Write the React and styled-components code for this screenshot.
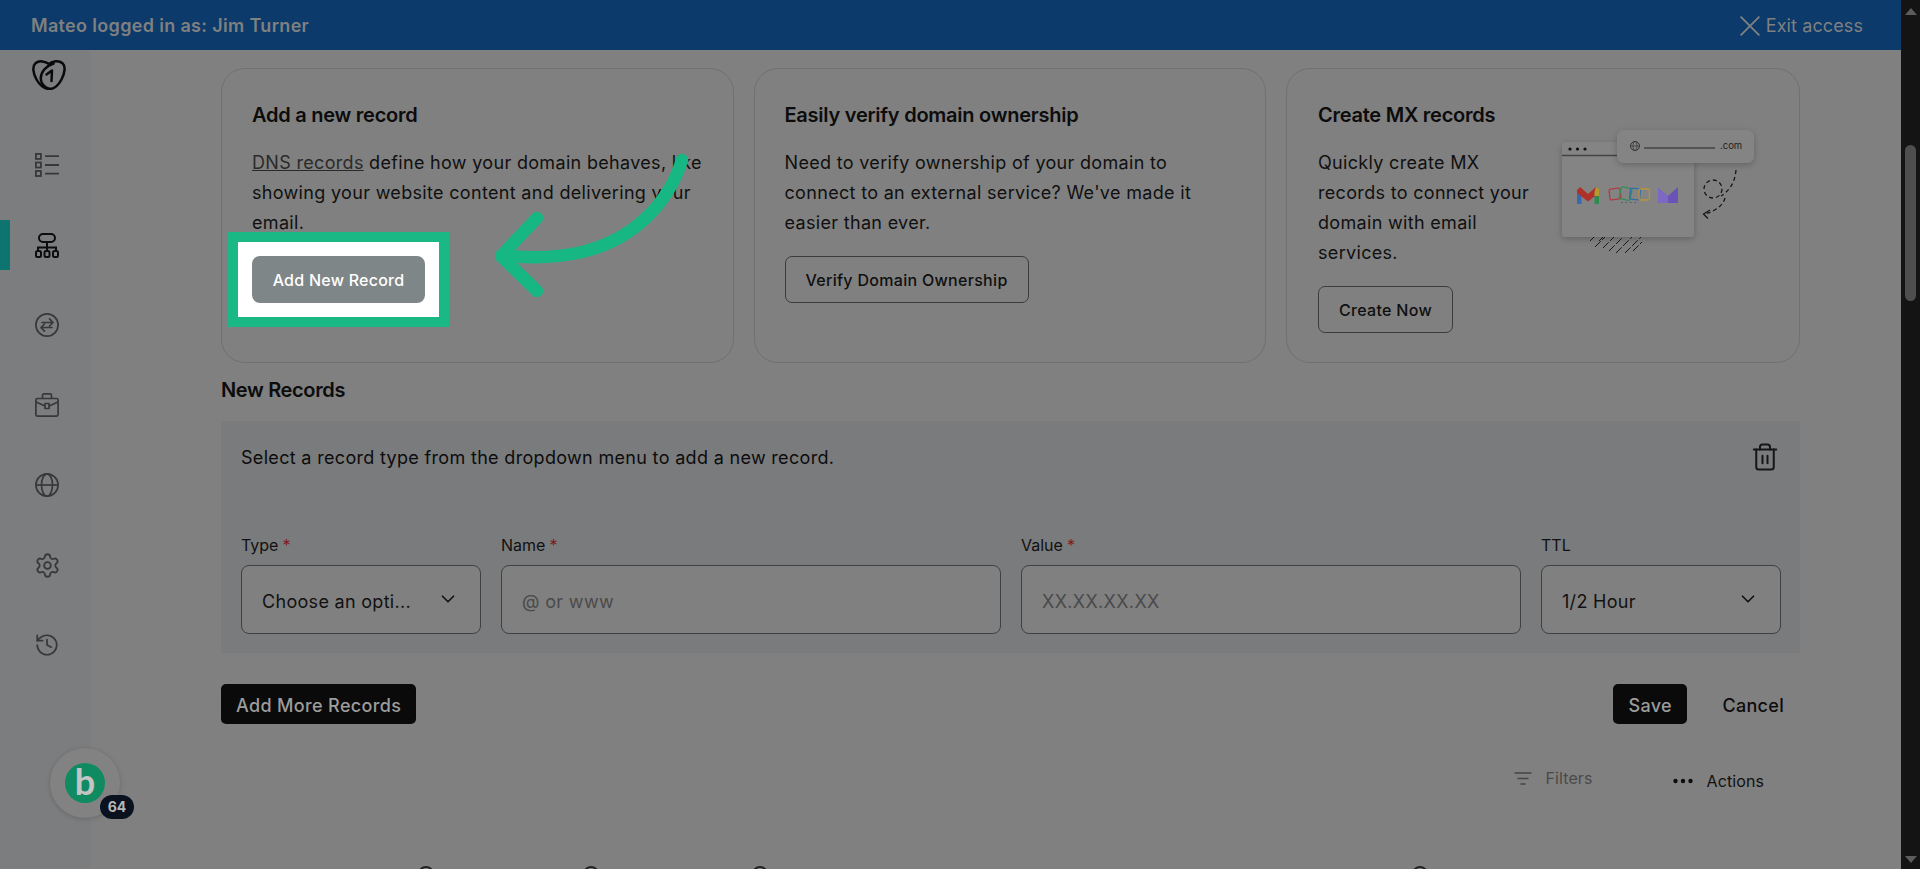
import React from 'react';
import styled, { createGlobalStyle } from 'styled-components';
import { ChevronDown, Trash2, Settings, History } from 'lucide-react';

const GlobalStyle = createGlobalStyle`
  html, body {
    margin: 0;
    height: 100%;
    overflow: hidden;
    background: #808080;
  }
  * { box-sizing: border-box; }
  #root { height: 100%; }
`;

const Page = styled.div`
  display: flex;
  height: 869px;
  font-family: Inter, "Liberation Sans", sans-serif;
  color: #0c0c0c;
  position: relative;
  overflow: hidden;
`;

const Column = styled.div`
  flex: 1;
  min-width: 0;
  display: flex;
  flex-direction: column;
`;

const TopBar = styled.header`
  height: 50px;
  flex: none;
  background: #0b3a6b;
  color: #808080;
  display: flex;
  align-items: center;
  justify-content: space-between;
  padding: 1px 38px 0 31px;
  font-size: 18px;
`;

const LoggedIn = styled.span`
  font-weight: 600;
  letter-spacing: 0.33px;
`;

const ExitAccess = styled.span`
  display: flex;
  align-items: center;
  gap: 6px;
  letter-spacing: 0.1px;
`;

const Body = styled.div`
  flex: 1;
  display: flex;
  min-height: 0;
`;

const Sidebar = styled.nav`
  width: 90px;
  flex: none;
  background: #7c7d7f;
  display: flex;
  flex-direction: column;
`;

const LogoWrap = styled.div`
  height: 75px;
  padding: 10px 0 0 32px;
`;

const SideItem = styled.div`
  height: 80px;
  flex: none;
  padding-left: 35px;
  display: flex;
  align-items: center;
  color: ${(p) => (p.$active ? '#0d0d0d' : '#383838')};
  position: relative;

  &::before {
    content: '';
    display: ${(p) => (p.$active ? 'block' : 'none')};
    position: absolute;
    left: 0;
    top: 15px;
    width: 10px;
    height: 50px;
    background: #0e7470;
  }
`;

const GearIcon = styled(Settings)`
  margin-left: -1.5px;
`;

const HistoryIcon = styled(History)`
  margin-left: -1px;
`;

const Main = styled.main`
  flex: 1;
  min-width: 0;
  padding: 18px 101px 0 131px;
  overflow: hidden;
`;

const CardRow = styled.section`
  display: grid;
  grid-template-columns: repeat(3, 1fr);
  gap: 20px;
`;

const Card = styled.article`
  height: 295px;
  border: 1px solid #6e7072;
  border-radius: 24px;
  padding: 31px 30px 0 ${(p) => (p.$split ? 31 : 30)}px;
  position: relative;
  display: ${(p) => (p.$split ? 'flex' : 'block')};
`;

const CardTitle = styled.h3`
  margin: 0 0 18px;
  font-size: 20px;
  line-height: 30px;
  font-weight: 600;
  letter-spacing: -0.25px;
`;

const CardText = styled.p`
  margin: 0 0 18px;
  font-size: 18px;
  line-height: 30px;
  letter-spacing: 0.32px;
  color: #101010;
`;

const TextLink = styled.a`
  color: #2a2a2a;
  text-decoration: underline;
`;

const CardCopy = styled.div`
  width: 226px;
  margin-right: 5px;
  flex: none;
`;

const OutlineButton = styled.button`
  height: 47px;
  padding: 0 20px;
  background: transparent;
  border: 1px solid #3c3c3c;
  border-radius: 7px;
  font: 500 16px Inter, "Liberation Sans", sans-serif;
  letter-spacing: 0.3px;
  color: #0f0f0f;
`;

const Spotlight = styled.span`
  position: relative;
  display: inline-block;
  z-index: 1;

  &::before {
    content: '';
    position: absolute;
    inset: -24px;
    background: #fff;
    border: 10px solid #1ab884;
  }
`;

const SpotButton = styled.button`
  position: relative;
  height: 47px;
  width: 173px;
  background: #7f8687;
  border: none;
  border-radius: 8px;
  font: 500 16px Inter, "Liberation Sans", sans-serif;
  letter-spacing: 0.25px;
  color: #fff;
`;

const ArrowSvg = styled.svg`
  position: absolute;
  left: 268px;
  top: 81px;
  z-index: 2;
`;

const Illustration = styled.svg`
  flex: none;
  margin-top: 25px;
`;

const SectionTitle = styled.h2`
  margin: 12px 0 16px;
  font-size: 20px;
  line-height: 30px;
  font-weight: 600;
  letter-spacing: -0.35px;
`;

const RecordPanel = styled.section`
  height: 232px;
  background: #7a7b7d;
  padding: 22px 19px 19px 20px;
  display: flex;
  flex-direction: column;
  justify-content: space-between;
`;

const PanelHead = styled.div`
  display: flex;
  justify-content: space-between;
  align-items: flex-start;
`;

const PanelText = styled.p`
  margin: 0;
  font-size: 18px;
  line-height: 30px;
  letter-spacing: 0.32px;
`;

const TrashButton = styled.span`
  color: #161616;
  margin: -1px 1px 0 0;
  display: flex;
`;

const FieldGrid = styled.div`
  display: grid;
  grid-template-columns: 240px 500px 500px 240px;
  gap: 20px;
`;

const Field = styled.label`
  display: flex;
  flex-direction: column;
  gap: 9px;
  font-size: 16px;
  line-height: 22px;
  color: #111;
`;

const Required = styled.span`
  color: #7e1c1c;
  margin-left: 4px;
`;

const SelectBox = styled.div`
  height: 69px;
  border: 1px solid #3f4041;
  border-radius: 8px;
  background: #808080;
  display: flex;
  align-items: center;
  justify-content: space-between;
  padding: 5px 21px 0 20px;
  font-size: 18px;
  letter-spacing: 0.3px;
  color: #111;

  svg { margin-top: -7px; }
`;

const TextInput = styled.input`
  height: 69px;
  border: 1px solid #3f4041;
  border-radius: 8px;
  background: #808080;
  padding: 3px 20px 0;
  font: 400 18px Inter, "Liberation Sans", sans-serif;
  letter-spacing: 0.35px;
  outline: none;

  &::placeholder { color: #4a4a4a; opacity: 1; }
`;

const ActionRow = styled.div`
  display: flex;
  align-items: center;
  margin-top: 31px;
`;

const DarkButton = styled.button`
  height: 40px;
  padding: 2px 15px 0;
  background: #0a0a0a;
  border: none;
  border-radius: 5px;
  font: 500 18px Inter, "Liberation Sans", sans-serif;
  letter-spacing: 0.35px;
  color: #9c9c9c;
`;

const PushRight = styled.div`
  margin-left: auto;
`;

const CancelButton = styled.button`
  height: 40px;
  width: 113px;
  padding: 2px 16px 0 0;
  text-align: right;
  background: none;
  border: none;
  font: 500 18px Inter, "Liberation Sans", sans-serif;
  letter-spacing: 0.3px;
  color: #0c0c0c;
`;

const ToolRow = styled.div`
  display: flex;
  justify-content: flex-end;
  align-items: flex-start;
  gap: 80px;
  margin-top: 44px;
  padding-right: 36px;
  height: 98px;
  font-size: 16px;
  line-height: 20px;
`;

const ToolItem = styled.span`
  display: flex;
  align-items: center;
  gap: ${(p) => p.$gap}px;
  color: ${(p) => (p.$muted ? '#4a4a4a' : '#111')};
  margin-top: ${(p) => (p.$muted ? 0 : 3)}px;
  letter-spacing: 0.1px;
`;

const HeadRow = styled.div`
  display: flex;
  padding-left: 197px;
`;

const SortMark = styled.span`
  width: 16px;
  height: 16px;
  flex: none;
  border: 2px solid #222;
  border-radius: 50%;
  margin-left: ${(p) => p.$offset}px;
`;

const ScrollTrack = styled.aside`
  width: 19px;
  flex: none;
  background: #141414;
  padding: 8px 4px 0;
  display: flex;
  flex-direction: column;
  align-items: center;
  position: relative;
`;

const ArrowUp = styled.span`
  border-left: 6px solid transparent;
  border-right: 6px solid transparent;
  border-bottom: 7px solid #5c5c5c;
`;

const ArrowDown = styled.span`
  position: absolute;
  bottom: 6px;
  border-left: 6px solid transparent;
  border-right: 6px solid transparent;
  border-top: 7px solid #5c5c5c;
`;

const Thumb = styled.span`
  width: 11px;
  height: 156px;
  margin-top: 130px;
  border-radius: 6px;
  background: #4e4e4e;
`;

const Widget = styled.div`
  position: absolute;
  left: 50px;
  top: 748px;
  width: 70px;
  height: 70px;
  border-radius: 50%;
  background: #828282;
  box-shadow: 0 1px 5px rgba(0, 0, 0, 0.18);
  display: flex;
  align-items: center;
  justify-content: center;
`;

const WidgetLogo = styled.span`
  width: 40px;
  height: 40px;
  border-radius: 50%;
  background: #108a61;
  color: #c4c4c4;
  font: 700 36px/36px Lato, "Liberation Sans", sans-serif;
  text-align: center;
`;

const WidgetBadge = styled.span`
  position: absolute;
  left: 50px;
  top: 47px;
  width: 34px;
  height: 24px;
  border-radius: 12px;
  background: #0a1220;
  color: #b8b8b8;
  font: 700 14px/24px Inter, "Liberation Sans", sans-serif;
  text-align: center;
`;

const GoLogo = () => (
  <svg width="34" height="30" viewBox="0 0 34 30" fill="none" stroke="#0a0a0a" strokeWidth="2.5" strokeLinecap="round" strokeLinejoin="round">
    <path d="M17 4C13.500 1.200 7 .2 3.500 3.200C.2 6.200 .8 13 4.500 19.500C8 25.500 13 29 17.500 29C22 29 26.500 25 29.500 19.500C33 13 33.800 6 30.500 3.200C27 .2 20.500 1 17 4Z" />
    <path d="M21.500 3.500C14 6 8.500 12 8.800 19C9 24 13 27.800 17.500 29" />
    <path d="M14.500 14.500L20 10.500L19.500 21" />
  </svg>
);

const ListIcon = () => (
  <svg width="24" height="24" viewBox="0 0 24 24" fill="none" stroke="currentColor" strokeWidth="1.8">
    <rect x=".9" y=".9" width="5" height="5" />
    <rect x=".9" y="9.500" width="5" height="5" />
    <rect x=".9" y="18" width="5" height="5" />
    <path d="M10 3.200H24M10 12H24M10 20.600H24" />
  </svg>
);

const DnsIcon = () => (
  <svg width="24" height="25" viewBox="0 0 24 25" fill="none" stroke="currentColor" strokeWidth="2">
    <rect x="4" y="1" width="16" height="8" rx="4" />
    <path d="M12 9V17M3 18V14.500H21V18" />
    <rect x="1" y="18" width="5" height="6" rx="1.500" />
    <rect x="9.500" y="18" width="5" height="6" rx="1.500" />
    <rect x="18" y="18" width="5" height="6" rx="1.500" />
  </svg>
);

const SwapIcon = () => (
  <svg width="24" height="24" viewBox="0 0 24 24" fill="none" stroke="currentColor" strokeWidth="1.7" strokeLinecap="round" strokeLinejoin="round">
    <circle cx="12" cy="12" r="11.100" />
    <path d="M7 9.500H18M14.500 5.800L18 9.500L14.500 13" />
    <path d="M17 14.500H6M9.500 11L6 14.500L9.500 18.200" />
  </svg>
);

const CaseIcon = () => (
  <svg width="24" height="24" viewBox="0 0 24 24" fill="none" stroke="currentColor" strokeWidth="1.7" strokeLinejoin="round">
    <rect x=".9" y="5.500" width="22.200" height="17.600" rx="1.500" />
    <path d="M7.500 5.500V2.500C7.500 1.500 8.200 .9 9 .9H15C15.800 .9 16.500 1.500 16.500 2.500V5.500" />
    <path d="M1 9L10 13M23 9L14 13" />
    <rect x="10" y="10.500" width="4" height="5" />
  </svg>
);

const GlobeIcon = () => (
  <svg width="24" height="24" viewBox="0 0 24 24" fill="none" stroke="currentColor" strokeWidth="1.7">
    <circle cx="12" cy="12" r="11.100" />
    <ellipse cx="12" cy="12" rx="5.500" ry="11.100" />
    <path d="M1 12H23" />
  </svg>
);

const CloseIcon = () => (
  <svg width="20" height="20" viewBox="0 0 20 20" stroke="#808080" strokeWidth="1.800">
    <path d="M.6 .6L19.400 19.400M19.400 .6L.6 19.400" />
  </svg>
);

const FilterIcon = () => (
  <svg width="18" height="13" viewBox="0 0 18 13" stroke="#444" strokeWidth="1.500">
    <path d="M.5 1H17.500M3.500 6.500H14.500M6.500 12H11.500" />
  </svg>
);

const DotsIcon = () => (
  <svg width="20" height="6" viewBox="0 0 20 6" fill="#0c0c0c">
    <circle cx="2.500" cy="3" r="2.200" />
    <circle cx="10" cy="3" r="2.200" />
    <circle cx="17.500" cy="3" r="2.200" />
  </svg>
);

const CurvedArrow = () => (
  <ArrowSvg width="210" height="150" viewBox="490 150 210 150" fill="none" stroke="#17b783" strokeWidth="12.500" strokeLinecap="round" strokeLinejoin="round">
    <path d="M682 160C668 205 632 240 582 252C556 258 530 258 510 256" />
    <path d="M537 218L501 256L537 291" />
  </ArrowSvg>
);

const hatch = [
  [1591, 241, 1595, 237], [1600, 241, 1604, 237], [1596, 247, 1606, 237], [1604, 248, 1615, 237],
  [1610, 251, 1624, 237], [1617, 253, 1633, 237], [1626, 253, 1642, 237], [1634, 251, 1643, 242],
];

const MxIllustration = () => (
  <Illustration width="220" height="140" viewBox="1550 125 220 140" fill="none">
    <defs>
      <filter id="softShadow" x="-20%" y="-20%" width="140%" height="150%">
        <feDropShadow dx="0" dy="2" stdDeviation="3" floodColor="#000" floodOpacity="0.22" />
      </filter>
    </defs>
    {hatch.map(([x1, y1, x2, y2]) => (
      <path key={`${x1}-${y1}`} d={`M${x1} ${y1}L${x2} ${y2}`} stroke="#1a1a1a" strokeWidth="1" strokeDasharray="8 2" />
    ))}
    <rect x="1563" y="142" width="132" height="95" rx="4" fill="#848485" filter="url(#softShadow)" />
    <circle cx="1571" cy="149" r="1.600" fill="#111" />
    <circle cx="1578.500" cy="149" r="1.600" fill="#111" />
    <circle cx="1586" cy="149" r="1.600" fill="#111" />
    <path d="M1563 155.500H1622" stroke="#444" strokeWidth="1.500" />
    <rect x="1618" y="130" width="137" height="33" rx="7" fill="#848485" filter="url(#softShadow)" />
    <circle cx="1636" cy="146" r="4.500" stroke="#333" />
    <ellipse cx="1636" cy="146" rx="2" ry="4.500" stroke="#333" strokeWidth=".7" />
    <path d="M1631.500 146H1640.500" stroke="#333" strokeWidth=".7" />
    <path d="M1645 148H1716" stroke="#444" strokeWidth="1.300" />
    <text x="1721" y="149" fontFamily="Inter, sans-serif" fontSize="9.500" fill="#222">.com</text>
    <path d="M1578 204V190H1582.500V204Z" fill="#3a68ad" />
    <path d="M1595.500 204V190H1600V204Z" fill="#2f8a4d" />
    <path d="M1578 190L1581 187L1589 194L1597 187L1600 190V193L1589 201.500L1578 193Z" fill="#b0302a" />
    <path d="M1595.500 192L1597 187L1600 189V196L1595.500 196Z" fill="#b39a2c" />
    <g fill="none" strokeWidth="1.300">
      <rect x="1610.500" y="188.500" width="11" height="11" rx="1.500" stroke="#b43a3e" transform="rotate(-7 1616 194)" />
      <rect x="1621" y="187.500" width="11" height="12" rx="1.500" stroke="#2f8f58" transform="rotate(12 1626 194)" />
      <rect x="1631" y="188.500" width="10" height="11" rx="1.500" stroke="#2f6fa8" transform="rotate(6 1636 194)" />
      <rect x="1640" y="189" width="10.500" height="11" rx="1.500" stroke="#b8933a" />
    </g>
    <path d="M1622 202.500H1639" stroke="#555" strokeWidth="1.200" strokeDasharray="1.500 3" />
    <path d="M1659 188L1669 196L1679 187V203H1659Z" fill="#6a52b6" />
    <path d="M1659 188L1669 196V203H1659Z" fill="#7d69c4" />
    <path d="M1737 170C1736 183 1730 191 1722 196" stroke="#161616" strokeWidth="1.300" strokeDasharray="4 3" />
    <path d="M1726 198C1724 206 1716 211 1706 214" stroke="#161616" strokeWidth="1.300" strokeDasharray="4 3" />
    <path d="M1711 210L1704.500 214L1709 218.500" stroke="#161616" strokeWidth="1.300" />
    <circle cx="1714" cy="189" r="9" stroke="#161616" strokeWidth="1.300" strokeDasharray="4 3" />
  </Illustration>
);

const App = () => (
  <Page>
    <GlobalStyle />
    <Column>
      <TopBar>
        <LoggedIn>Mateo logged in as: Jim Turner</LoggedIn>
        <ExitAccess>
          <CloseIcon />
          Exit access
        </ExitAccess>
      </TopBar>
      <Body>
        <Sidebar>
          <LogoWrap>
            <GoLogo />
          </LogoWrap>
          <SideItem><ListIcon /></SideItem>
          <SideItem $active><DnsIcon /></SideItem>
          <SideItem><SwapIcon /></SideItem>
          <SideItem><CaseIcon /></SideItem>
          <SideItem><GlobeIcon /></SideItem>
          <SideItem><GearIcon size={27} strokeWidth={1.6} /></SideItem>
          <SideItem><HistoryIcon size={26} strokeWidth={1.6} /></SideItem>
        </Sidebar>
        <Main>
          <CardRow>
            <Card>
              <CardTitle>Add a new record</CardTitle>
              <CardText>
                <TextLink>DNS records</TextLink> define how your domain behaves, like showing your website content and delivering your email.
              </CardText>
              <Spotlight>
                <SpotButton>Add New Record</SpotButton>
              </Spotlight>
              <CurvedArrow />
            </Card>
            <Card>
              <CardTitle>Easily verify domain ownership</CardTitle>
              <CardText>
                Need to verify ownership of your domain to connect to an external service? We've made it easier than ever.
              </CardText>
              <OutlineButton>Verify Domain Ownership</OutlineButton>
            </Card>
            <Card $split>
              <CardCopy>
                <CardTitle>Create MX records</CardTitle>
                <CardText>Quickly create MX records to connect your domain with email services.</CardText>
                <OutlineButton>Create Now</OutlineButton>
              </CardCopy>
              <MxIllustration />
            </Card>
          </CardRow>
          <SectionTitle>New Records</SectionTitle>
          <RecordPanel>
            <PanelHead>
              <PanelText>Select a record type from the dropdown menu to add a new record.</PanelText>
              <TrashButton><Trash2 size={30} strokeWidth={1.6} /></TrashButton>
            </PanelHead>
            <FieldGrid>
              <Field>
                <span>Type<Required>*</Required></span>
                <SelectBox>Choose an opti...<ChevronDown size={22} strokeWidth={1.8} /></SelectBox>
              </Field>
              <Field>
                <span>Name<Required>*</Required></span>
                <TextInput placeholder="@ or www" />
              </Field>
              <Field>
                <span>Value<Required>*</Required></span>
                <TextInput placeholder="XX.XX.XX.XX" />
              </Field>
              <Field>
                <span>TTL</span>
                <SelectBox>1/2 Hour<ChevronDown size={22} strokeWidth={1.8} /></SelectBox>
              </Field>
            </FieldGrid>
          </RecordPanel>
          <ActionRow>
            <DarkButton>Add More Records</DarkButton>
            <PushRight />
            <DarkButton>Save</DarkButton>
            <CancelButton>Cancel</CancelButton>
          </ActionRow>
          <ToolRow>
            <ToolItem $muted $gap={14}><FilterIcon />Filters</ToolItem>
            <ToolItem $gap={14}><DotsIcon />Actions</ToolItem>
          </ToolRow>
          <HeadRow>
            <SortMark $offset={0} />
            <SortMark $offset={149} />
            <SortMark $offset={153} />
            <SortMark $offset={644} />
          </HeadRow>
        </Main>
      </Body>
    </Column>
    <ScrollTrack>
      <ArrowUp />
      <Thumb />
      <ArrowDown />
    </ScrollTrack>
    <Widget>
      <WidgetLogo>b</WidgetLogo>
      <WidgetBadge>64</WidgetBadge>
    </Widget>
  </Page>
);

export default App;
